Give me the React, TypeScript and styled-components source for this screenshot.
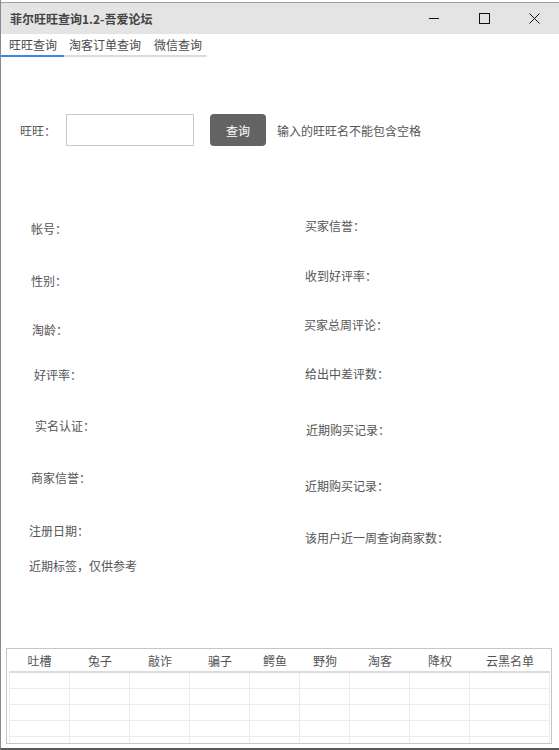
import React from 'react';
import styled, {createGlobalStyle} from 'styled-components';

const GlobalStyle = createGlobalStyle`
  html, body {
    margin: 0;
    padding: 0;
    background: #fff;
  }

  body {
    font-family: "Noto Sans CJK SC", "Liberation Sans", sans-serif;
    font-size: 12px;
    color: #555;
  }
`;

const Window = styled.div`
  display: flex;
  flex-direction: column;
  box-sizing: border-box;

  width: 559px;
  height: 750px;

  padding-top: 2px;
  border-left: 1px solid #8a8a8a;
  border-bottom: 2px solid #5a5a5a;
  background: #fff;
`;

const TitleBar = styled.div`
  display: flex;
  align-items: center;

  height: 31px;
  border-top: 1px solid #a0a0a0;

  background-color: #e4e4e4;
`;

const Title = styled.span`
  flex: 1;
  padding-left: 9px;

  font-size: 12px;
  font-weight: 700;
  color: #444;
`;

const CtrlBtn = styled.span`
  display: flex;
  justify-content: center;
  align-items: center;

  width: 50px;
  height: 31px;
`;

const Tabs = styled.div`
  display: flex;
  align-items: flex-end;

  height: 22px;
  margin-top: 1px;
`;

const Tab = styled.span<{active?: boolean, w: number, pl: number}>`
  box-sizing: border-box;
  width: ${p => p.w}px;
  padding: 0 0 1px ${p => p.pl}px;

  border-bottom: 2px solid ${p => p.active ? '#3b86f0' : '#dcdcdc'};

  font-size: 12px;
  line-height: 18px;
  color: #4a4a4a;
  white-space: nowrap;
`;

const QueryRow = styled.div`
  display: flex;
  align-items: center;

  height: 32px;
  margin-top: 57px;
  padding-left: 19px;
`;

const QueryLabel = styled.span`
  width: 46px;
`;

const Input = styled.input`
  box-sizing: border-box;

  width: 128px;
  height: 32px;

  border: 1px solid #c9c9d0;
  outline: none;
`;

const QueryBtn = styled.button`
  box-sizing: border-box;

  width: 56px;
  height: 32px;
  margin-left: 16px;

  border: none;
  border-radius: 4px;
  background-color: #636363;

  font-family: inherit;
  font-size: 12px;
  color: #fff;
`;

const Hint = styled.span`
  margin-left: 11px;
`;

const Fields = styled.div`
  display: grid;
  grid-template-columns: 273px 1fr;
  margin-top: 75px;
`;

const Column = styled.div`
  display: flex;
  flex-direction: column;
`;

const Field = styled.div<{gap: number, indent: number}>`
  margin-top: ${p => p.gap}px;
  padding-left: ${p => p.indent}px;

  line-height: 16px;
  white-space: nowrap;
`;

const Table = styled.div`
  box-sizing: border-box;

  width: 546px;
  height: 96px;
  margin: auto 0 4px 5px;
  padding: 0 1px;

  border: 1px solid #c6c6c6;
  overflow: hidden;
`;

const Grid = styled.div`
  display: grid;
  grid-template-columns: 61px 60px 60px 60px 50px 50px 60px 60px 80px;
  width: 541px;
  margin-left: 1px;
`;

const HeadCell = styled.div`
  height: 22px;
  border-bottom: 2px solid #dcdcdc;

  text-align: center;
  line-height: 24px;
  color: #555;
`;

const BodyCell = styled.div<{first: boolean}>`
  height: 15px;
  border-bottom: 1px solid #ececec;
  border-right: 1px solid #ececec;
  border-left: ${p => p.first ? '1px solid #ececec' : 'none'};
`;

const cols = ['吐槽', '兔子', '敲诈', '骗子', '鳄鱼', '野狗', '淘客', '降权', '云黑名单'];

const left = [
    {t: '帐号：', gap: 0, i: 30},
    {t: '性别：', gap: 36, i: 30},
    {t: '淘龄：', gap: 33, i: 31},
    {t: '好评率：', gap: 29, i: 33},
    {t: '实名认证：', gap: 35, i: 34},
    {t: '商家信誉：', gap: 36, i: 30},
    {t: '注册日期：', gap: 37, i: 28},
    {t: '近期标签，仅供参考', gap: 19, i: 28},
];

const right = [
    {t: '买家信誉：', gap: -3, i: 31},
    {t: '收到好评率：', gap: 34, i: 31},
    {t: '买家总周评论：', gap: 33, i: 30},
    {t: '给出中差评数：', gap: 33, i: 31},
    {t: '近期购买记录：', gap: 40, i: 32},
    {t: '近期购买记录：', gap: 40, i: 31},
    {t: '该用户近一周查询商家数：', gap: 36, i: 31},
];

export default function App() {
    return (
        <>
            <GlobalStyle/>
            <Window>
                <TitleBar>
                    <Title>菲尔旺旺查询1.2-吾爱论坛</Title>
                    <CtrlBtn>
                        <svg width="11" height="11" viewBox="0 0 11 11">
                            <path d="M0 5.5h10" stroke="#111" strokeWidth="1"/>
                        </svg>
                    </CtrlBtn>
                    <CtrlBtn>
                        <svg width="11" height="11" viewBox="0 0 11 11">
                            <rect x="0.5" y="0.5" width="10" height="10" fill="none" stroke="#111"/>
                        </svg>
                    </CtrlBtn>
                    <CtrlBtn>
                        <svg width="11" height="11" viewBox="0 0 11 11">
                            <path d="M0.5 0.5l10 10M10.5 0.5l-10 10" stroke="#111" strokeWidth="1"/>
                        </svg>
                    </CtrlBtn>
                </TitleBar>
                <Tabs>
                    <Tab active w={63} pl={8}>旺旺查询</Tab>
                    <Tab w={85} pl={5}>淘客订单查询</Tab>
                    <Tab w={58} pl={5}>微信查询</Tab>
                </Tabs>
                <QueryRow>
                    <QueryLabel>旺旺：</QueryLabel>
                    <Input/>
                    <QueryBtn>查询</QueryBtn>
                    <Hint>输入的旺旺名不能包含空格</Hint>
                </QueryRow>
                <Fields>
                    <Column>
                        {left.map((f, k) => <Field key={k} gap={f.gap} indent={f.i}>{f.t}</Field>)}
                    </Column>
                    <Column>
                        {right.map((f, k) => <Field key={k} gap={f.gap} indent={f.i}>{f.t}</Field>)}
                    </Column>
                </Fields>
                <Table>
                    <Grid>
                        {cols.map(c => <HeadCell key={c}>{c}</HeadCell>)}
                        {Array.from({length: 5}).flatMap((_, r) =>
                            cols.map((c, j) => <BodyCell key={r + c} first={j === 0}/>))}
                    </Grid>
                </Table>
            </Window>
        </>
    );
}
